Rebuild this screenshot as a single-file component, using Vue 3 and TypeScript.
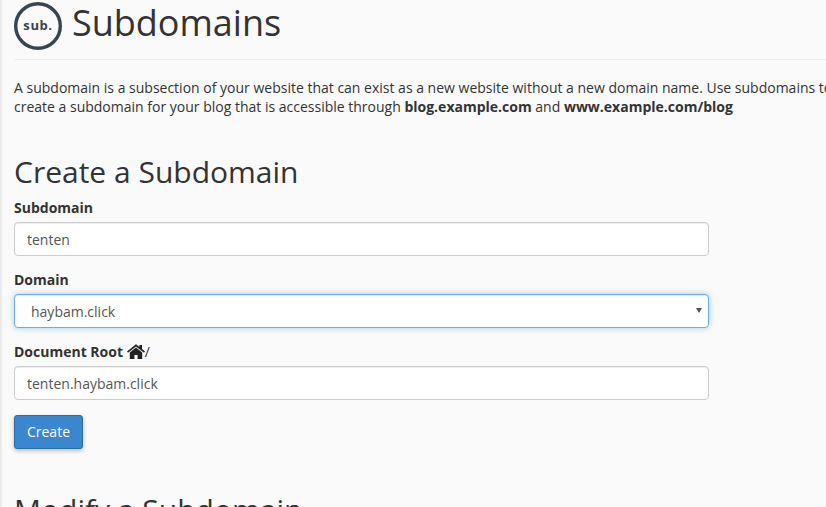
<template>
  <div class="page">
    <div class="edge"></div>
    <div class="content">
      <header class="head">
        <svg class="logo" width="48" height="48" viewBox="0 0 48 48">
          <circle cx="24" cy="24" r="22.3" fill="none" stroke="#36454f" stroke-width="3.4" />
          <text x="24" y="28" text-anchor="middle" class="logo-text">sub.</text>
        </svg>
        <h1>Subdomains</h1>
      </header>

      <p class="intro">
        A subdomain is a subsection of your website that can exist as a new website without a new domain name. Use subdomains to<br />
        create a subdomain for your blog that is accessible through <b>blog.example.com</b> and <b>www.example.com/blog</b>
      </p>

      <h2>Create a Subdomain</h2>

      <form class="form" @submit.prevent>
        <div class="group">
          <label for="sub">Subdomain</label>
          <input id="sub" v-model="subdomain" type="text" />
        </div>
        <div class="group">
          <label for="dom">Domain</label>
          <div class="select-wrap">
            <select id="dom" v-model="domain">
              <option value="haybam.click">haybam.click</option>
            </select>
            <span class="caret"></span>
          </div>
        </div>
        <div class="group">
          <label for="root" class="root-label">
            Document Root
            <svg class="home" width="18" height="15" viewBox="0 0 18 15">
              <path d="M9 .2 0 7.4l1 1.3L9 2.4l8 6.3 1-1.3-3-2.4V1h-2.6v2L9 .2Z" fill="#222" />
              <path d="M9 3.4 2.8 8.4V15h4.6v-4h3.2v4h4.6V8.4L9 3.4Z" fill="#222" />
            </svg><span class="slash">/</span>
          </label>
          <input id="root" v-model="docRoot" type="text" />
        </div>
        <button type="submit" class="btn">Create</button>
      </form>

      <h2 class="modify">Modify a Subdomain</h2>
    </div>
  </div>
</template>

<script setup lang="ts">
import { ref } from 'vue'

const subdomain = ref('tenten')
const domain = ref('haybam.click')
const docRoot = ref('tenten.haybam.click')
</script>

<style>
html, body {
  margin: 0;
  height: 100%;
  overflow: hidden;
  background: #fafafa;
}
</style>

<style scoped>
.page {
  position: relative;
  height: 507px;
  overflow: hidden;
  background: #fafafa;
  color: #333;
  font-family: "Open Sans", "Liberation Sans", sans-serif;
  font-size: 14px;
  line-height: 20px;
}

.edge {
  position: absolute;
  left: 0;
  top: 0;
  bottom: 0;
  width: 3px;
  background: linear-gradient(to right, #e6e6e6, #fafafa);
}

.content {
  padding-left: 14px;
  width: 1100px;
}

.head {
  display: flex;
  align-items: flex-start;
  gap: 10px;
  box-sizing: border-box;
  border-bottom: 1px solid #eee;
  height: 60px;
}

.logo {
  flex: none;
  margin-top: 2px;
}

.logo-text {
  font-family: "Open Sans", sans-serif;
  font-size: 13px;
  font-weight: 700;
  letter-spacing: 0.6px;
  fill: #36454f;
}

h1 {
  margin: 1px 0 0;
  font-size: 36px;
  font-weight: 400;
  line-height: 44px;
}

.intro {
  margin: 18px 0 0;
  line-height: 19px;
  white-space: nowrap;
}

h2 {
  margin: 38px 0 0;
  font-size: 30px;
  font-weight: 400;
  line-height: 36px;
}

.form {
  width: 695px;
  margin-top: 9px;
}

.group {
  margin-bottom: 15px;
}

label {
  display: block;
  font-weight: 700;
  margin-bottom: 5px;
  line-height: 18px;
  height: 18px;
}

.root-label .home {
  vertical-align: -2px;
}

.slash {
  font-weight: 400;
}

input,
select {
  display: block;
  width: 100%;
  height: 34px;
  box-sizing: border-box;
  border: 1px solid #ccc;
  border-radius: 4px;
  background: #fff;
  padding: 6px 12px;
  font: inherit;
  color: #555;
  box-shadow: inset 0 1px 1px rgba(0, 0, 0, 0.075);
  outline: none;
}

.select-wrap {
  position: relative;
}

select {
  appearance: none;
  padding: 7px 12px 5px 16px;
  border-color: #66afe9;
  box-shadow: inset 0 1px 1px rgba(0, 0, 0, 0.075), 0 0 6px rgba(102, 175, 233, 0.6);
}

.caret {
  position: absolute;
  right: 7px;
  top: 14px;
  width: 0;
  height: 0;
  border-left: 3px solid transparent;
  border-right: 3px solid transparent;
  border-top: 5px solid #555;
}

.btn {
  display: block;
  height: 34px;
  width: 69px;
  padding: 0;
  border: 1px solid #2e6da4;
  border-radius: 3px;
  background: #3a87d0;
  color: #fff;
  font: inherit;
  box-shadow: 0 2px 4px rgba(0, 0, 0, 0.25);
}

.modify {
  margin-top: 43px;
}
</style>
